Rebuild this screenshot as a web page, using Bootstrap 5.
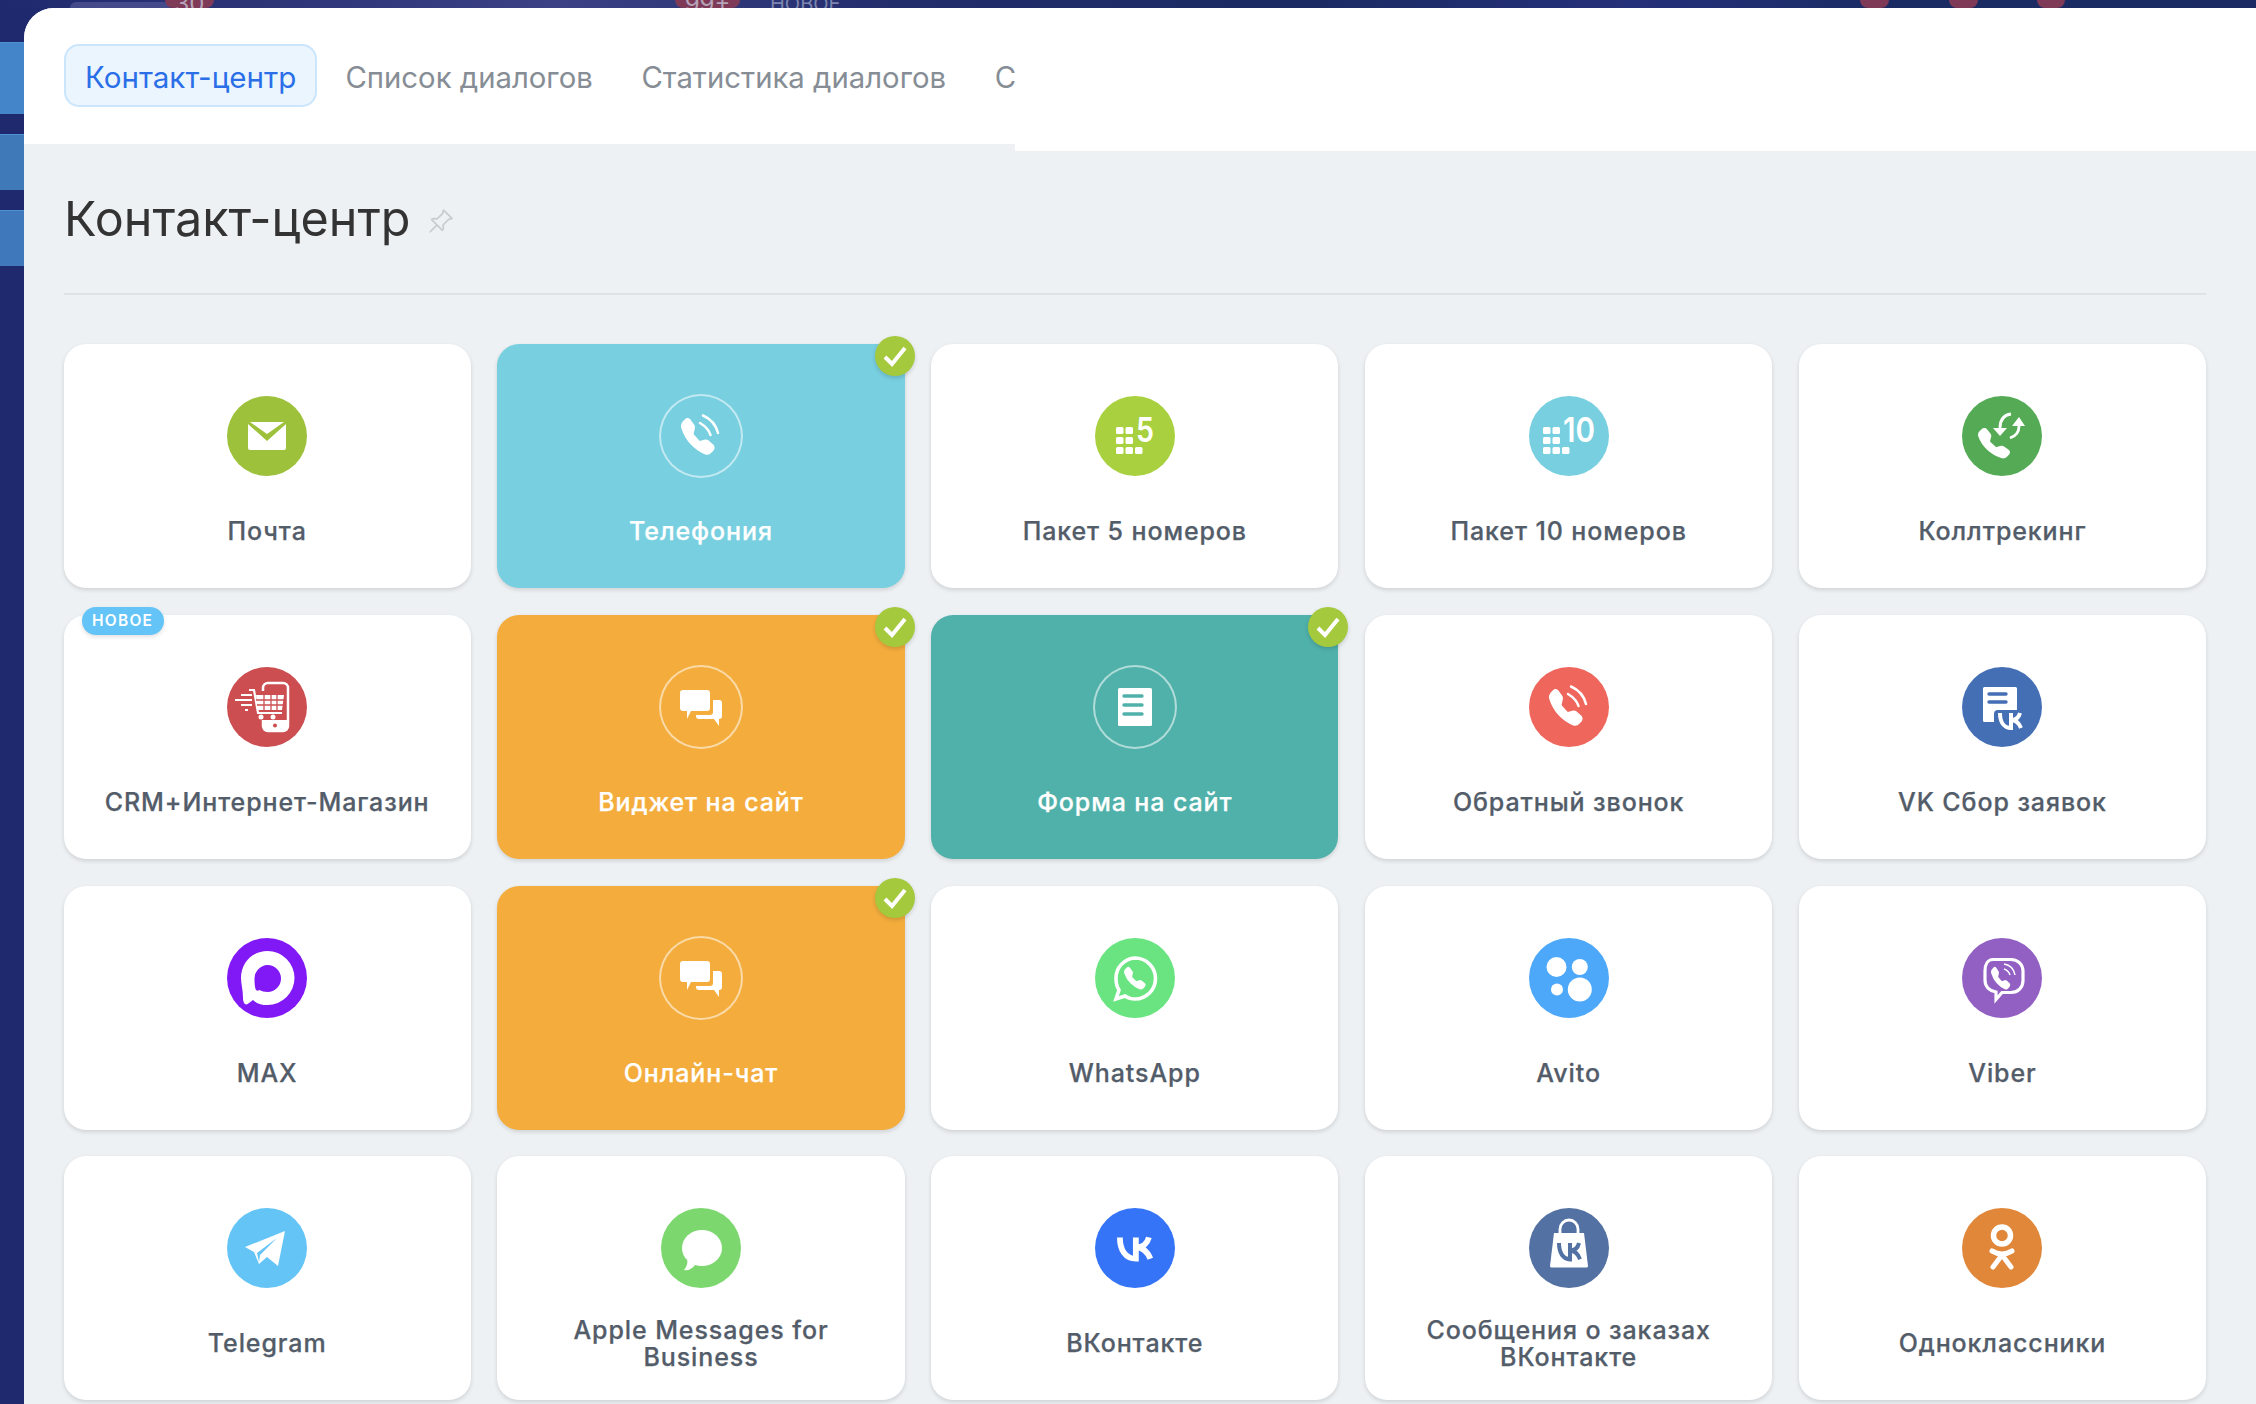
<!DOCTYPE html>
<html lang="ru">
<head>
    <meta charset="UTF-8">
    <title>Контакт-центр</title>
    <link href="https://cdn.jsdelivr.net/npm/bootstrap@5.3.0/dist/css/bootstrap.min.css" rel="stylesheet">
    <style>
        html, body { height: 100%; }
        body { background: #1e2a6d; font-family: Inter, "Liberation Sans", sans-serif; overflow: hidden; }

        /* what is left of the page behind the slider */
        .strip { height: 8px; flex: none; background: linear-gradient(90deg, #1f2a6e 0, #2c3476 250px, #3b4184 560px, #222d6c 900px, #1b2a62 1300px, #25307a 1630px, #1a2b63 1900px, #1b2a62 100%); }
        .strip span { line-height: 8px; color: #b5a5b8; font-size: 24px; text-align: center; overflow: hidden; }
        .strip .bdg { background: #7f3a58; border-radius: 0 0 8px 8px; }
        .strip .pill { width: 100px; margin: 2px 0 0 70px; height: 6px; background: #454b8a; border-radius: 8px 8px 0 0; }
        .strip .b30 { width: 49px; margin-left: -5px; }
        .strip .b99 { width: 65px; margin-left: 461px; }
        .strip .new { margin-left: 30px; font-size: 20px; color: #7d85ad; }
        .strip .r1 { width: 29px; margin-left: 1019px; }
        .strip .r2 { width: 29px; margin-left: 60px; }
        .strip .r3 { width: 28px; margin-left: 59px; }

        .side { width: 24px; flex: none; padding-top: 34px; gap: 20px; }
        .side div { background: #4484c8; border-top: 1px solid #4f90d2; }
        .side .s1 { height: 72px; }
        .side .s2 { height: 56px; background: #3f79b8; }
        .side .s3 { height: 56px; background: #3f78bb; }

        .panel { background: #edf1f4; border-top-left-radius: 30px; overflow: hidden; }
        .tabs-left { width: 991px; height: 136px; background: #fff; padding: 36px 0 0 40px; overflow: hidden; flex: none; }
        .tabs-right { height: 143px; background: #fff; }
        .tabs-left .nav { flex-wrap: nowrap; gap: 4.600px; }
        .tabs-left .nav-item:first-child { margin-right: 1.400px; }
        .tabs-left .nav-link { font-size: 29.300px; line-height: 35px; padding: 15px 21px 11px; border: 1px solid transparent; border-radius: 15px; color: #868d95; white-space: nowrap; }
        .tabs-left .nav-link.active { font-size: 29.600px; background: #ebf5fe; border: 2px solid #cbe5fd; padding: 14px 19px 10px 19px; color: #2a6fe8; }

        .content { padding: 0 50px 0 40px; }
        .page-title { font-size: 48.500px; line-height: 54px; font-weight: 400; color: #333; margin: 41px 0 0; }
        .pin { width: 27px; height: 27px; fill: #c8ccd1; margin-left: 16.500px; vertical-align: 1px; }
        .divider { height: 2px; background: #dfe3e6; margin: 47px 0 49px; }

        .channels { display: grid; grid-template-columns: repeat(5, 1fr); gap: 26.750px; grid-auto-rows: 244px; margin-left: -.4px; }
        .channel { border: 0; border-radius: 22px; box-shadow: 0 2px 4px rgba(0, 0, 0, .13); align-items: center; padding-top: 52px; color: #535c69; }
        .channel .ico { width: 80px; height: 80px; border-radius: 50%; flex: none; display: block; }
        .channel .name { flex: 1; display: flex; align-items: center; justify-content: center; text-align: center; font-size: 25px; line-height: 27px; font-weight: 500; letter-spacing: .9px; -webkit-text-stroke: .25px currentColor; padding: 0 30px 1px; }
        .channel.on { color: #fff; }
        .channel.on .ico { box-shadow: 0 0 0 2px rgba(255, 255, 255, .55); }
        .tick { top: -8px; right: -10px; width: 40px; height: 40px; border-radius: 50%; background: #a4c93c; box-shadow: 0 2px 4px rgba(0, 0, 0, .15); }
        .new-badge { top: -8px; left: 18px; width: 82px; height: 28px; border-radius: 14px; background: #64c4f7; color: #fff; font-size: 15.500px; line-height: 28px; font-weight: 600; text-align: center; letter-spacing: 1.200px; box-shadow: 0 2px 4px rgba(0, 0, 0, .12); }

        .c-mail { background: #9dc13a; }
        .c-tel { background: #78cfe0; }
        .c-five { background: #a9d03f; }
        .c-ten { background: #78cfe0; }
        .c-track { background: #55ab55; }
        .c-shop { background: #cc4e50; }
        .c-orange { background: #f4ad3d; }
        .c-teal { background: #50b1aa; }
        .c-back { background: #ef665c; }
        .c-vkform { background: #446fb5; }
        .c-max { background: #8118f6; }
        .c-wa { background: #69e481; }
        .c-avito { background: #4ea8f9; }
        .c-viber { background: #925fc3; }
        .c-tg { background: #64c4f6; }
        .c-apple { background: #7cd86e; }
        .c-vk { background: #3574f6; }
        .c-vkshop { background: #5371a2; }
        .c-ok { background: #e0873a; }
        .digit { font-family: Inter, "Liberation Sans", sans-serif; font-weight: 600; font-size: 34px; fill: #fff; }
    </style>
</head>
<body class="d-flex flex-column">
    <svg width="0" height="0" class="position-absolute">
        <defs>
            <path id="ph" d="M1.885.511a1.745 1.745 0 0 1 2.61.163L6.29 2.98c.329.423.445.974.315 1.494l-.547 2.19a.678.678 0 0 0 .178.643l2.457 2.457a.678.678 0 0 0 .644.178l2.189-.547a1.745 1.745 0 0 1 1.494.315l2.306 1.794c.829.645.905 1.87.163 2.611l-1.034 1.034c-.74.74-1.846 1.065-2.877.702a18.634 18.634 0 0 1-7.01-4.42 18.634 18.634 0 0 1-4.42-7.009c-.362-1.03-.037-2.137.703-2.877L1.885.511z"/>
            <g id="call">
                <use href="#ph" fill="#fff" transform="translate(20 22) scale(2.1 2.3)"/>
                <path d="M42 19.5C50 23 55 29 57 37M39 27c5 3 9 7 10.500 12" fill="none" stroke="#fff" stroke-width="2.500" stroke-linecap="round"/>
            </g>
            <g id="chat" fill="#fff">
                <path d="M22 23h24a3 3 0 0 1 3 3v15a3 3 0 0 1-3 3H30l-4 8v-8h-4a3 3 0 0 1-3-3V26a3 3 0 0 1 3-3z"/>
                <path d="M52 33h6a3 3 0 0 1 3 3v13a3 3 0 0 1-3 3v7l-5-7H38a3 3 0 0 1-3-3v-1h14a3 3 0 0 0 3-3z"/>
            </g>
            <g id="vk" fill="none" stroke-width="4">
                <path d="M2 1c0 9 4 15 11 15V1M13 8c5 0 8-3 9-7M13 8c5 0 8 3 10 8"/>
            </g>
            <path id="tick" d="M10 21l7 7 13-16" fill="none" stroke="#fff" stroke-width="4"/>
            <g id="dots" fill="#fff">
                <rect x="21" y="31" width="7.500" height="7" rx="1.500"/><rect x="30.500" y="31" width="7.500" height="7" rx="1.500"/>
                <rect x="21" y="41" width="7.500" height="7" rx="1.500"/><rect x="30.500" y="41" width="7.500" height="7" rx="1.500"/>
                <rect x="21" y="51" width="7.500" height="7" rx="1.500"/><rect x="30.500" y="51" width="7.500" height="7" rx="1.500"/><rect x="40" y="51" width="7.500" height="7" rx="1.500"/>
            </g>
        </defs>
    </svg>

    <div class="strip d-flex overflow-hidden">
        <span class="pill"></span>
        <span class="bdg b30">30</span>
        <span class="bdg b99">99+</span>
        <span class="new">НОВОЕ</span>
        <span class="bdg r1"></span>
        <span class="bdg r2"></span>
        <span class="bdg r3"></span>
    </div>

    <div class="d-flex flex-grow-1 overflow-hidden">
        <div class="side d-flex flex-column">
            <div class="s1"></div>
            <div class="s2"></div>
            <div class="s3"></div>
        </div>

        <div class="panel flex-grow-1">
            <div class="d-flex">
                <div class="tabs-left">
                    <ul class="nav">
                        <li class="nav-item"><a class="nav-link active" href="#">Контакт-центр</a></li>
                        <li class="nav-item"><a class="nav-link" href="#">Список диалогов</a></li>
                        <li class="nav-item"><a class="nav-link" href="#">Статистика диалогов</a></li>
                        <li class="nav-item"><a class="nav-link" href="#">С</a></li>
                    </ul>
                </div>
                <div class="tabs-right flex-grow-1"></div>
            </div>

            <div class="content">
                <h1 class="page-title">Контакт-центр<svg class="pin" viewBox="0 0 16 16"><path d="M9.828.722a.5.5 0 0 1 .354.146l4.95 4.95a.5.5 0 0 1 0 .707c-.48.48-1.072.588-1.503.588-.177 0-.335-.018-.46-.039l-3.134 3.134a5.927 5.927 0 0 1 .16 1.013c.046.702-.032 1.687-.72 2.375a.5.5 0 0 1-.707 0l-2.829-2.828-3.182 3.182c-.195.195-1.219.902-1.414.707-.195-.195.512-1.22.707-1.414l3.182-3.182-2.828-2.829a.5.5 0 0 1 0-.707c.688-.688 1.673-.767 2.375-.72a5.922 5.922 0 0 1 1.013.16l3.134-3.133a2.772 2.772 0 0 1-.04-.461c0-.43.108-1.022.589-1.503a.5.5 0 0 1 .353-.146zm.122 2.112v-.002.002zm0-.002v.002a.5.5 0 0 1-.122.51L6.293 6.878a.5.5 0 0 1-.511.12H5.78l-.014-.004a4.507 4.507 0 0 0-.288-.076 4.922 4.922 0 0 0-.765-.116c-.422-.028-.836.008-1.175.15l5.51 5.509c.141-.34.177-.753.149-1.175a4.924 4.924 0 0 0-.192-1.054l-.004-.013v-.001a.5.5 0 0 1 .12-.512l3.536-3.535a.5.5 0 0 1 .532-.115l.096.022c.087.017.208.034.344.034.114 0 .23-.011.343-.04L9.927 2.028c-.029.113-.04.23-.04.343a1.779 1.779 0 0 0 .062.46z"/></svg></h1>
                <div class="divider"></div>

                <div class="channels">
                    <div class="card channel">
                        <svg class="ico c-mail" viewBox="0 0 80 80"><path d="M23 26h34L40 38z" fill="#fff"/><path d="M21 28l19 17 19-17v24a2 2 0 0 1-2 2H23a2 2 0 0 1-2-2z" fill="#fff"/></svg>
                        <div class="name">Почта</div>
                    </div>
                    <div class="card channel on c-tel">
                        <svg class="ico" viewBox="0 0 80 80"><use href="#call"/></svg>
                        <div class="name">Телефония</div>
                        <span class="tick position-absolute"><svg width="40" height="40"><use href="#tick"/></svg></span>
                    </div>
                    <div class="card channel">
                        <svg class="ico c-five" viewBox="0 0 80 80"><use href="#dots"/><text class="digit" x="41" y="46" textLength="18" lengthAdjust="spacingAndGlyphs">5</text></svg>
                        <div class="name">Пакет 5 номеров</div>
                    </div>
                    <div class="card channel">
                        <svg class="ico c-ten" viewBox="0 0 80 80"><use href="#dots" transform="translate(-7 0)"/><text class="digit" x="34" y="46" textLength="32" lengthAdjust="spacingAndGlyphs">10</text></svg>
                        <div class="name">Пакет 10 номеров</div>
                    </div>
                    <div class="card channel">
                        <svg class="ico c-track" viewBox="0 0 80 80">
                            <use href="#ph" fill="#fff" transform="translate(16 32) scale(2 1.900)"/>
                            <path d="M49 18c-7 1-11 6-11 14M57 30c0 6-3 10-9 12" fill="none" stroke="#fff" stroke-width="2.800"/>
                            <path d="M31 32h14l-7 8zM57 21l6 9H50z" fill="#fff"/>
                        </svg>
                        <div class="name">Коллтрекинг</div>
                    </div>

                    <div class="card channel">
                        <svg class="ico c-shop" viewBox="0 0 80 80">
                            <path d="M36 24v-3a5 5 0 0 1 5-5h15a5 5 0 0 1 5 5v38a5 5 0 0 1-5 5H41a5 5 0 0 1-5-5v-6" fill="none" stroke="#fff" stroke-width="2.500"/>
                            <path d="M36 53h25v6a5 5 0 0 1-5 5H41a5 5 0 0 1-5-5z" fill="#fff"/><circle cx="48" cy="58.500" r="2" fill="#cc4e50"/>
                            <path d="M22 23h5l4 23h24" fill="none" stroke="#fff" stroke-width="2.200"/>
                            <path d="M29 28h28l-2 15H31z" fill="#fff"/>
                            <path d="M29 33h28M30 38h26M37 28v15M44 28v15M50 28v15" stroke="#cc4e50" stroke-width="1.300" fill="none"/>
                            <circle cx="34" cy="50" r="2.500" fill="#fff"/><circle cx="46" cy="50" r="2.500" fill="#fff"/>
                            <path d="M14 28h11M8 33h17M14 38h11M18 43h3" stroke="#fff" stroke-width="2" fill="none"/>
                        </svg>
                        <div class="name">CRM+Интернет-Магазин</div>
                        <span class="new-badge position-absolute">НОВОЕ</span>
                    </div>
                    <div class="card channel on c-orange">
                        <svg class="ico" viewBox="0 0 80 80"><use href="#chat"/></svg>
                        <div class="name">Виджет на сайт</div>
                        <span class="tick position-absolute"><svg width="40" height="40"><use href="#tick"/></svg></span>
                    </div>
                    <div class="card channel on c-teal">
                        <svg class="ico" viewBox="0 0 80 80"><rect x="23" y="21" width="34" height="38" rx="1.500" fill="#fff"/><path d="M29 29h18M29 38h18M29 47h18" stroke="#50b1aa" stroke-width="3.400" stroke-linecap="round"/></svg>
                        <div class="name">Форма на сайт</div>
                        <span class="tick position-absolute"><svg width="40" height="40"><use href="#tick"/></svg></span>
                    </div>
                    <div class="card channel">
                        <svg class="ico c-back" viewBox="0 0 80 80"><use href="#call"/></svg>
                        <div class="name">Обратный звонок</div>
                    </div>
                    <div class="card channel">
                        <svg class="ico c-vkform" viewBox="0 0 80 80">
                            <rect x="21" y="20" width="34" height="35" rx="1.500" fill="#fff"/>
                            <path d="M27 27h17M27 35h17" stroke="#446fb5" stroke-width="3.400" stroke-linecap="round"/>
                            <rect x="32" y="43" width="34" height="22" rx="4" fill="#446fb5"/>
                            <use href="#vk" stroke="#fff" transform="translate(36 45)"/>
                        </svg>
                        <div class="name">VK Сбор заявок</div>
                    </div>

                    <div class="card channel">
                        <svg class="ico c-max" viewBox="0 0 80 80">
                            <path d="M40.500 13C25 13 14 25 14 40c0 6 2 12 2 20 0 6 3 8 6 5l4-3c4 4 9 5 14.500 5a27 27 0 0 0 0-54z" fill="#fff"/>
                            <path d="M40.500 27a13.500 13.500 0 0 1 0 27c-3 0-6-1-8-2-2 1-3 1-4-1-1-4-1-7-1-10.500A13.500 13.500 0 0 1 40.500 27z" fill="#8118f6"/>
                        </svg>
                        <div class="name">MAX</div>
                    </div>
                    <div class="card channel on c-orange">
                        <svg class="ico" viewBox="0 0 80 80"><use href="#chat"/></svg>
                        <div class="name">Онлайн-чат</div>
                        <span class="tick position-absolute"><svg width="40" height="40"><use href="#tick"/></svg></span>
                    </div>
                    <div class="card channel">
                        <svg class="ico c-wa" viewBox="0 0 80 80">
                            <path d="M40 20a20.500 20.500 0 0 1 0 41c-4 0-7-1-10-3l-9 3 3-9c-2-3-3-7-3-11.500A20 20 0 0 1 40 20z" fill="none" stroke="#fff" stroke-width="3.600"/>
                            <use href="#ph" fill="#fff" transform="translate(29 29) scale(1.350 1.400)"/>
                        </svg>
                        <div class="name">WhatsApp</div>
                    </div>
                    <div class="card channel">
                        <svg class="ico c-avito" viewBox="0 0 80 80"><g fill="#fff"><circle cx="27.500" cy="29" r="10"/><circle cx="50.800" cy="29" r="8"/><circle cx="28" cy="51.500" r="6"/><circle cx="50.800" cy="51.500" r="12"/></g></svg>
                        <div class="name">Avito</div>
                    </div>
                    <div class="card channel">
                        <svg class="ico c-viber" viewBox="0 0 80 80">
                            <path d="M31 21.500h18c7 0 12 5 12 12v9c0 7-5 12-12 12h-9l-6 7v-7.500c-6-1-11-5-11-12v-9c0-7 3-11.500 8-11.500z" fill="none" stroke="#fff" stroke-width="3.200"/>
                            <use href="#ph" fill="#fff" transform="translate(29 29) scale(1.200 1.400)"/>
                            <path d="M42 26c6 1 10 5 11 11M42 31c3 1 5 3 6 6" fill="none" stroke="#fff" stroke-width="1.500"/>
                        </svg>
                        <div class="name">Viber</div>
                    </div>

                    <div class="card channel">
                        <svg class="ico c-tg" viewBox="0 0 80 80">
                            <path d="M58 23L18 39l9 5 5 12 8-7 11 9z" fill="#fff"/>
                            <path d="M50 30L30 45l2 9 1-7z" fill="#64c4f6"/>
                        </svg>
                        <div class="name">Telegram</div>
                    </div>
                    <div class="card channel">
                        <svg class="ico c-apple" viewBox="0 0 80 80">
                            <ellipse cx="41" cy="40" rx="20" ry="18" fill="#fff"/>
                            <path d="M26 50c1 5 0 8-3 12 4 1 8-1 11-5z" fill="#fff"/>
                        </svg>
                        <div class="name">Apple Messages for Business</div>
                    </div>
                    <div class="card channel">
                        <svg class="ico c-vk" viewBox="0 0 80 80"><use href="#vk" stroke="#fff" transform="translate(22 28) scale(1.450 1.420)"/></svg>
                        <div class="name">ВКонтакте</div>
                    </div>
                    <div class="card channel">
                        <svg class="ico c-vkshop" viewBox="0 0 80 80">
                            <path d="M25 25h30l4 33a1.500 1.500 0 0 1-1.500 1.500h-35A1.500 1.500 0 0 1 21 58z" fill="#fff"/>
                            <path d="M31 25v-4a9 9 0 0 1 18 0v4" fill="none" stroke="#fff" stroke-width="2.800"/>
                            <use href="#vk" stroke="#5371a2" transform="translate(28 34) scale(1 1.080)"/>
                        </svg>
                        <div class="name">Сообщения о заказах ВКонтакте</div>
                    </div>
                    <div class="card channel">
                        <svg class="ico c-ok" viewBox="0 0 80 80">
                            <circle cx="40" cy="27.500" r="8.500" fill="none" stroke="#fff" stroke-width="5.500"/>
                            <path d="M30 43q10 6 20 0M40 47L31 59M40 47l9 12" fill="none" stroke="#fff" stroke-width="5" stroke-linecap="round"/>
                        </svg>
                        <div class="name">Одноклассники</div>
                    </div>
                </div>
            </div>
        </div>
    </div>

    <script src="https://cdn.jsdelivr.net/npm/bootstrap@5.3.0/dist/js/bootstrap.bundle.min.js"></script>
</body>
</html>
